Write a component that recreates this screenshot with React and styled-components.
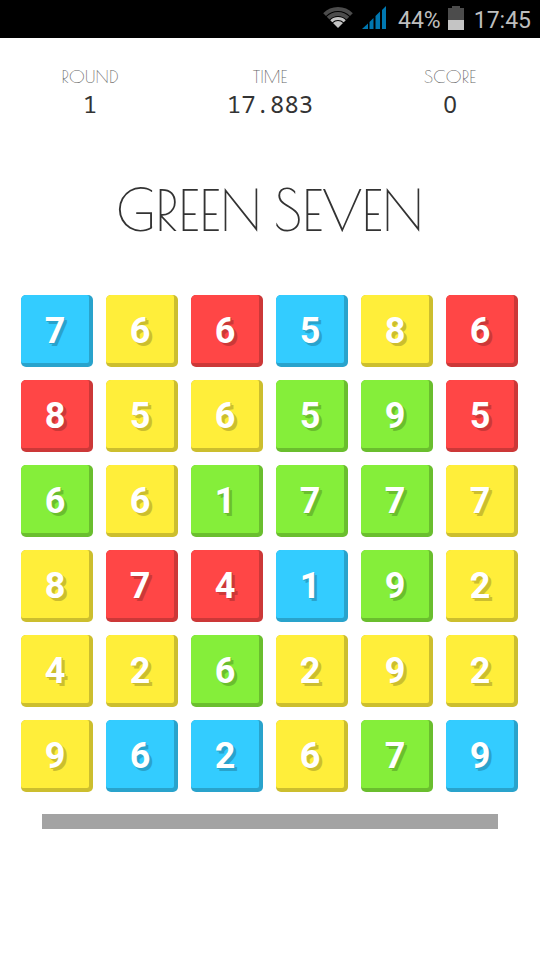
import React from "react";
import styled, { createGlobalStyle } from "styled-components";

const GlobalStyle = createGlobalStyle`
  * { box-sizing: border-box; }
  body { margin: 0; background: #fff; }
  button { font: inherit; }
`;

const display = `"Poiret One", "Noto Sans", sans-serif`;

const Screen = styled.div`
  min-height: 100vh;
  display: flex;
  flex-direction: column;
  background: #fff;
  color: #333;
`;

const StatusBar = styled.header`
  height: 38px;
  padding: 0 9px 2px 0;
  display: flex;
  align-items: center;
  justify-content: flex-end;
  background: #000;
  color: #bebebe;
  font: 400 23px/28px Roboto, sans-serif;
`;

const StatusIcon = styled.svg`
  display: block;
  margin-right: ${(p) => p.$gap}px;
`;

const StatusText = styled.span`
  padding-top: 6px;
  margin-right: ${(p) => p.$gap || 0}px;
`;

const Stats = styled.dl`
  margin: 0;
  padding: 28px 0 0;
  display: grid;
  grid-template-columns: repeat(3, 1fr);
  text-align: center;
`;

const Label = styled.dt`
  font: 400 18px/22px ${display};
  color: #666;
`;

const Value = styled.dd`
  margin: 0;
  font: 400 24px/32px ${(p) => (p.$plain ? "" : `"Noto Sans Mono",`)} "Noto Sans", sans-serif;
`;

const Title = styled.h1`
  margin: 58px 0 0;
  font: 400 56px/64px ${display};
  text-align: center;
`;

const Board = styled.main`
  margin: 53px 22px 0 21px;
  display: grid;
  grid-template-columns: repeat(6, 1fr);
  gap: 13px;
`;

const palette = {
  b: ["#33ccff", "#29a3cc"],
  y: ["#ffee3a", "#ccbe2e"],
  r: ["#ff4646", "#cc3838"],
  g: ["#85ee3a", "#6abe2e"],
};

const Tile = styled.button`
  display: flex;
  aspect-ratio: 1;
  padding: 0 4px 4px 0;
  border: 0;
  border-radius: 5px;
  background: ${(p) => palette[p.$tone][1]};
  cursor: pointer;
`;

const Face = styled.span`
  flex: 1;
  align-self: stretch;
  display: flex;
  align-items: center;
  justify-content: center;
  border-radius: 5px 2px 2px 2px;
  background: ${(p) => palette[p.$tone][0]};
  color: #fff;
  font: 700 36px/40px Roboto, sans-serif;
  text-shadow: 1px 1px ${(p) => palette[p.$tone][1]}, 3px 3px ${(p) => palette[p.$tone][1]};
  padding-top: 4px;
`;

const Timer = styled.div`
  height: 15px;
  margin: 22px 42px 0;
  background: #a3a3a3;
`;

const rows = [
  "b7 y6 r6 b5 y8 r6",
  "r8 y5 y6 g5 g9 r5",
  "g6 y6 g1 g7 g7 y7",
  "y8 r7 r4 b1 g9 y2",
  "y4 y2 g6 y2 y9 y2",
  "y9 b6 b2 y6 g7 b9",
];
const tiles = rows.flatMap((row) => row.split(" "));

function Wifi() {
  return (
    <StatusIcon $gap={9} width="30" height="24" viewBox="0 0 30 24" aria-label="Wi-Fi">
      <clipPath id="fan"><path d="M15 22 0 7V0h30v7z" /></clipPath>
      <g clipPath="url(#fan)" fill="none">
        <circle cx="15" cy="22" r="19" stroke="#4c4c4c" strokeWidth="4" />
        <circle cx="15" cy="22" r="14" stroke="#4c4c4c" strokeWidth="4" />
        <circle cx="15" cy="22" r="9.500" stroke="#c4c4c4" strokeWidth="3" />
        <circle cx="15" cy="22" r="7" fill="#c4c4c4" />
      </g>
    </StatusIcon>
  );
}

function Signal() {
  return (
    <StatusIcon $gap={12} width="24" height="24" viewBox="0 0 24 24" aria-label="Signal">
      <g fill="#0077b0">
        <path d="M0 23 6 17.500V23z" />
        <path d="M7.500 16 11.500 12V23h-4z" />
        <path d="M13.500 10 18 5.500V23h-4.500z" />
        <path d="M20 4 24 0V23h-4z" />
      </g>
    </StatusIcon>
  );
}

function Battery() {
  return (
    <StatusIcon $gap={10} width="16" height="24" viewBox="0 0 16 24" aria-label="Battery">
      <path d="M0 2h4V0h8v2h4v12H0z" fill="#4c4c4c" />
      <path d="M0 14h16v10H0z" fill="#c4c4c4" />
    </StatusIcon>
  );
}

export default function App() {
  return (
    <Screen>
      <GlobalStyle />
      <StatusBar>
        <Wifi />
        <Signal />
        <StatusText $gap={7}>44%</StatusText>
        <Battery />
        <StatusText>17:45</StatusText>
      </StatusBar>
      <Stats>
        <div><Label>ROUND</Label><Value>1</Value></div>
        <div><Label>TIME</Label><Value>17.883</Value></div>
        <div><Label>SCORE</Label><Value $plain>0</Value></div>
      </Stats>
      <Title>GREEN SEVEN</Title>
      <Board>
        {tiles.map(([tone, digit], i) => (
          <Tile key={i} type="button" $tone={tone}>
            <Face $tone={tone}>{digit}</Face>
          </Tile>
        ))}
      </Board>
      <Timer role="progressbar" aria-label="Time left" />
    </Screen>
  );
}
